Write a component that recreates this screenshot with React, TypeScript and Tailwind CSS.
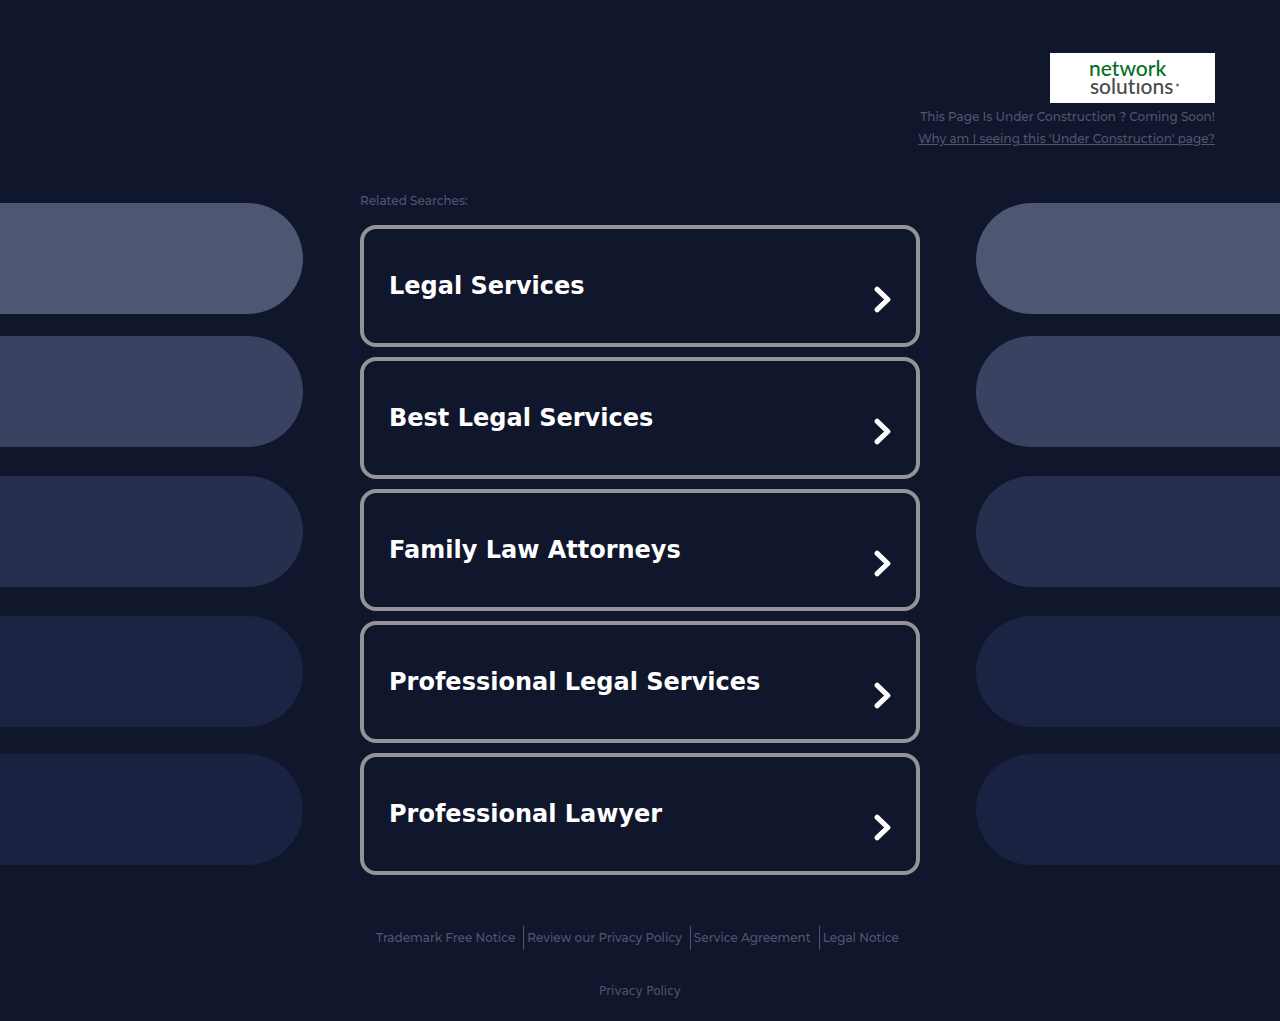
const searches = [
    "Legal Services",
    "Best Legal Services",
    "Family Law Attorneys",
    "Professional Legal Services",
    "Professional Lawyer",
];

const notices = [
    "Trademark Free Notice",
    "Review our Privacy Policy",
    "Service Agreement",
    "Legal Notice",
];

const bars = [
    "bg-[#4e5772] mb-[22px]",
    "bg-[#3a4261] mb-[29px]",
    "bg-[#262f4e] mb-[29px]",
    "bg-[#1b2443] mb-[27px]",
    "bg-[#192240]",
];

function Logo() {
    return (
        <svg
            className="h-[50px] w-[165px] bg-white font-[Lato,sans-serif] text-[21px]"
            viewBox="0 0 165 50"
            role="img"
            aria-label="network solutions"
        >
            <text x="39" y="23" fill="#00701f">
                network
            </text>
            <text x="40" y="41" fill="#4a4a4c">
                solut&#8204;ıons
            </text>
            <circle cx="127.500" cy="32" r="1.500" fill="#77777a" />
        </svg>
    );
}

function Bars({ side }: { side: "left" | "right" }) {
    const shape =
        side === "left" ? "mr-[57px] rounded-r-full" : "ml-14 rounded-l-full";
    return (
        <div className="min-w-0 flex-1 pt-3" aria-hidden="true">
            {bars.map((bar) => (
                <div key={bar} className={`h-[111px] ${shape} ${bar}`} />
            ))}
        </div>
    );
}

function SearchLink({ label }: { label: string }) {
    return (
        <a
            href="#"
            className="flex h-[122px] items-center justify-between rounded-2xl border-4 border-[#949498] px-[25px] font-['DejaVu_Sans',sans-serif] text-2xl font-bold text-white"
        >
            {label}
            <svg
                className="mt-7 h-7 w-[17px]"
                viewBox="0 0 17 28"
                fill="none"
                stroke="currentColor"
                strokeWidth="5.200"
                strokeLinecap="round"
                strokeLinejoin="round"
            >
                <path d="M3.200 3.300 13.800 13.500 3.200 23.700" />
            </svg>
        </a>
    );
}

export default function App() {
    return (
        <div className="min-h-screen bg-[#10162b] font-[Montserrat,Inter,sans-serif] text-xs font-medium text-[#4e5671]">
            <header className="flex flex-col items-end px-[65px] pt-[53px]">
                <Logo />
                <p className="mt-1 leading-5">
                    This Page Is Under Construction ? Coming Soon!
                </p>
                <a href="#" className="mt-0.5 leading-5 underline">
                    Why am I seeing this 'Under Construction' page?
                </a>
            </header>
            <main className="mt-[42px] flex">
                <Bars side="left" />
                <div className="w-[560px] max-w-full">
                    <h1 className="mb-3.5 leading-5">Related Searches:</h1>
                    <nav className="flex flex-col gap-2.5">
                        {searches.map((label) => (
                            <SearchLink key={label} label={label} />
                        ))}
                    </nav>
                </div>
                <Bars side="right" />
            </main>
            <footer className="flex flex-col items-center pt-[51px] pb-5">
                <ul className="flex divide-x divide-[#4e5671] leading-6">
                    {notices.map((notice) => (
                        <li key={notice} className="pr-2 pl-[3px]">
                            <a href="#">{notice}</a>
                        </li>
                    ))}
                </ul>
                <a
                    href="#"
                    className="mt-[31px] font-['DejaVu_Sans',sans-serif] leading-5 font-normal"
                >
                    Privacy Policy
                </a>
            </footer>
        </div>
    );
}
